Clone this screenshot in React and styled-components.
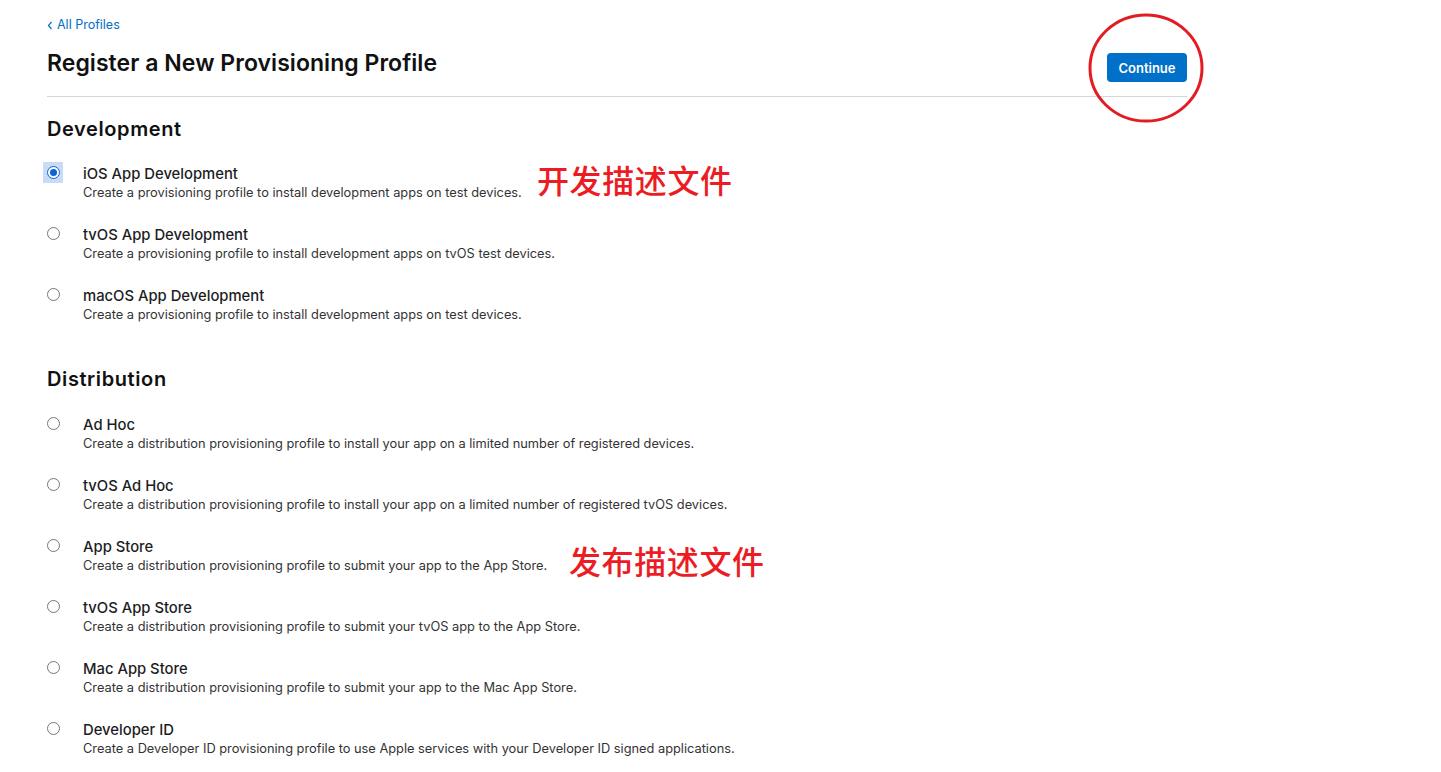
import styled, { createGlobalStyle } from "styled-components"

const GlobalStyle = createGlobalStyle`
    body {
        margin: 0;
        background: #fff;
        font-family: Inter, "Noto Sans", sans-serif;
        color: #1d1d1f;
    }
`

const Page = styled.div`
    position: relative;
    width: 1441px;
    min-height: 772px;
    overflow: hidden;
`

const Content = styled.div`
    width: 1140px;
    padding: 17px 0 0 47px;
    display: flex;
    flex-direction: column;
`

const BackLink = styled.a`
    font-size: 12.5px;
    line-height: 16px;
    color: #0070c9;
    text-decoration: none;
    display: flex;
    align-items: center;
    gap: 4px;
`

const Header = styled.div`
    display: flex;
    justify-content: space-between;
    align-items: flex-start;
    padding: 16px 0 14px;
    border-bottom: 1px solid #d6d6d6;
`

const Title = styled.h1`
    margin: 0;
    font-size: 23px;
    line-height: 28px;
    font-weight: 600;
    letter-spacing: 0.05px;
    color: #111;
`

const ContinueButton = styled.button`
    margin-top: 4px;
    width: 80px;
    height: 29px;
    border: none;
    border-radius: 4px;
    background: #0070c9;
    color: #fff;
    font-family: inherit;
    font-size: 13px;
    font-weight: 600;
`

const Section = styled.section`
    display: flex;
    flex-direction: column;
    padding-top: ${p => p.$top}px;
`

const SectionTitle = styled.h2`
    margin: 0 0 ${p => p.$gap}px;
    font-size: 20px;
    line-height: 24px;
    font-weight: 600;
    letter-spacing: 0.6px;
    color: #111;
`

const Options = styled.div`
    display: flex;
    flex-direction: column;
    gap: 24px;
`

const Option = styled.label`
    display: flex;
    align-items: flex-start;
`

const RadioBox = styled.span`
    flex: none;
    width: 20px;
    height: 21px;
    margin: -3px 20px 0 -4px;
    display: flex;
    align-items: center;
    justify-content: center;
    background: ${p => (p.$checked ? "#c9dcf6" : "transparent")};
`

const Radio = styled.span`
    box-sizing: border-box;
    width: 13px;
    height: 13px;
    border-radius: 50%;
    border: 1px solid ${p => (p.$checked ? "#0a64d8" : "#767676")};
    background: #fff;
    display: flex;
    align-items: center;
    justify-content: center;

    &::after {
        content: "";
        width: 7px;
        height: 7px;
        border-radius: 50%;
        background: ${p => (p.$checked ? "#0a64d8" : "transparent")};
    }
`

const OptionText = styled.div`
    display: flex;
    flex-direction: column;
`

const OptionName = styled.span`
    font-size: 14.8px;
    line-height: 19px;
    font-weight: 500;
    color: #1d1d1f;
`

const OptionDesc = styled.span`
    font-size: 12.8px;
    line-height: 18px;
    color: #333;
`

const Note = styled.div`
    position: absolute;
    left: ${p => p.$x}px;
    top: ${p => p.$y}px;
    font-family: "Noto Sans CJK SC", sans-serif;
    font-size: 32px;
    line-height: 36px;
    font-weight: 500;
    letter-spacing: 0.6px;
    color: #ec1c24;
`

const Circle = styled.svg`
    position: absolute;
    left: 1086px;
    top: 12px;
`

const development = [
    ["iOS App Development", "Create a provisioning profile to install development apps on test devices.", true],
    ["tvOS App Development", "Create a provisioning profile to install development apps on tvOS test devices."],
    ["macOS App Development", "Create a provisioning profile to install development apps on test devices."],
]

const distribution = [
    ["Ad Hoc", "Create a distribution provisioning profile to install your app on a limited number of registered devices."],
    ["tvOS Ad Hoc", "Create a distribution provisioning profile to install your app on a limited number of registered tvOS devices."],
    ["App Store", "Create a distribution provisioning profile to submit your app to the App Store."],
    ["tvOS App Store", "Create a distribution provisioning profile to submit your tvOS app to the App Store."],
    ["Mac App Store", "Create a distribution provisioning profile to submit your app to the Mac App Store."],
    ["Developer ID", "Create a Developer ID provisioning profile to use Apple services with your Developer ID signed applications."],
]

const OptionList = ({ items }) => (
    <Options>
        {items.map(([name, desc, checked]) => (
            <Option key={name}>
                <RadioBox $checked={checked}>
                    <Radio $checked={checked} />
                </RadioBox>
                <OptionText>
                    <OptionName>{name}</OptionName>
                    <OptionDesc>{desc}</OptionDesc>
                </OptionText>
            </Option>
        ))}
    </Options>
)

const App = () => {
    return (
        <Page>
            <GlobalStyle />
            <Content>
                <BackLink href="#">
                    <svg width="6" height="9" viewBox="0 0 6 9">
                        <path d="M4.5 1 1.5 4.5 4.5 8" fill="none" stroke="#0070c9" strokeWidth="1.2" />
                    </svg>
                    All Profiles
                </BackLink>
                <Header>
                    <Title>Register a New Provisioning Profile</Title>
                    <ContinueButton>Continue</ContinueButton>
                </Header>
                <Section $top={20}>
                    <SectionTitle $gap={24}>Development</SectionTitle>
                    <OptionList items={development} />
                </Section>
                <Section $top={43}>
                    <SectionTitle $gap={25}>Distribution</SectionTitle>
                    <OptionList items={distribution} />
                </Section>
            </Content>

            <Note $x={537} $y={161}>开发描述文件</Note>
            <Note $x={569} $y={542}>发布描述文件</Note>
            <Circle width="120" height="114" viewBox="0 0 120 114">
                <ellipse cx="60" cy="56" rx="56" ry="53" fill="none" stroke="#e31b23" strokeWidth="3" />
            </Circle>
        </Page>
    )
}

export default App
